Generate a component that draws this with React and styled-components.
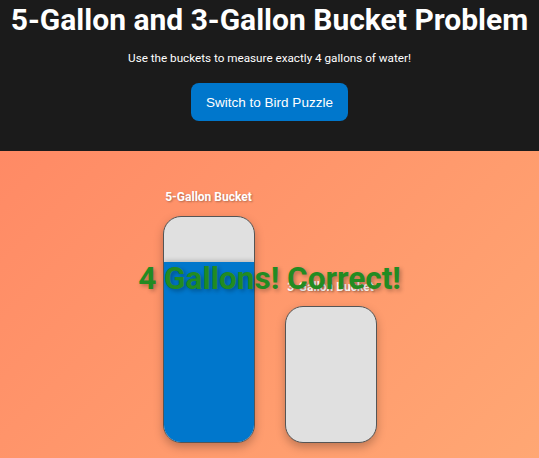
import React from 'react'
import styled, { createGlobalStyle } from 'styled-components'

const GlobalStyle = createGlobalStyle`
  html, body {
    margin: 0;
    padding: 0;
    background: #1b1b1b;
  }
  body {
    font-family: Roboto, 'Liberation Sans', Arial, sans-serif;
    overflow: hidden;
  }
`

const buckets = [
  { id: 5, label: '5-Gallon Bucket', capacity: 5, amount: 4 },
  { id: 3, label: '3-Gallon Bucket', capacity: 3, amount: 0 },
]

const UNIT = 45

const App = () => {
  return (
    <Page>
      <GlobalStyle />
      <Header>
        <Title>5-Gallon and 3-Gallon Bucket Problem</Title>
        <Subtitle>Use the buckets to measure exactly 4 gallons of water!</Subtitle>
        <SwitchButton>Switch to Bird Puzzle</SwitchButton>
      </Header>
      <Stage>
        <BucketRow>
          {buckets.map(b => (
            <BucketColumn key={b.id}>
              <BucketLabel>{b.label}</BucketLabel>
              <Bucket $height={b.capacity * UNIT}>
                <Water style={{ height: b.amount * UNIT }} />
              </Bucket>
            </BucketColumn>
          ))}
        </BucketRow>
        <Message>4 Gallons! Correct!</Message>
      </Stage>
    </Page>
  )
}

// --- STYLED COMPONENTS ---

const Page = styled.div`
  min-height: 100vh;
  display: flex;
  flex-direction: column;
`

const Header = styled.header`
  background: #1b1b1b;
  color: #fff;
  text-align: center;
  padding: 2px 0 30px;
  display: flex;
  flex-direction: column;
  align-items: center;
`

const Title = styled.h1`
  margin: 0;
  font-family: Roboto, sans-serif;
  font-weight: 700;
  font-size: 30px;
  white-space: nowrap;
`

const Subtitle = styled.p`
  margin: 14px 0 18px;
  font-family: Roboto, sans-serif;
  font-size: 11.7px;
`

const SwitchButton = styled.button`
  background: #0077cc;
  color: #fff;
  border: none;
  border-radius: 8px;
  padding: 11.5px 15px;
  font-family: 'Liberation Sans', Arial, sans-serif;
  font-size: 13.5px;
  cursor: pointer;

  &:hover {
    background: #005fa3;
  }
`

const Stage = styled.main`
  position: relative;
  flex: 1;
  background: linear-gradient(135deg, #ff8a65, #ffa874);
  padding: 39px 0 40px;
`

const BucketRow = styled.div`
  display: flex;
  justify-content: center;
  align-items: flex-end;
  gap: 30px;
`

const BucketColumn = styled.div`
  display: flex;
  flex-direction: column;
  align-items: center;
`

const BucketLabel = styled.div`
  color: #fff;
  font-family: Roboto, sans-serif;
  font-weight: 700;
  font-size: 12px;
  line-height: 14px;
  margin-bottom: 12px;
  text-shadow: 1px 1px 2px rgba(0, 0, 0, 0.3);
`

const Bucket = styled.div`
  position: relative;
  width: 90px;
  height: ${p => p.$height}px;
  background: #e0e0e0;
  border: 1px solid #555;
  border-radius: 18px;
  overflow: hidden;
  box-shadow: 0 4px 10px rgba(0, 0, 0, 0.25);
  display: flex;
  flex-direction: column;
  justify-content: flex-end;
`

const Water = styled.div`
  background: #0077cc;
  box-shadow: 0 -2px 4px rgba(0, 0, 0, 0.15);
`

const Message = styled.div`
  position: absolute;
  left: 0;
  right: 0;
  top: 109px;
  text-align: center;
  color: #228b22;
  font-family: Roboto, sans-serif;
  font-weight: 700;
  font-size: 31.5px;
  text-shadow: 2px 2px 4px rgba(0, 0, 0, 0.3);
`

export default App
